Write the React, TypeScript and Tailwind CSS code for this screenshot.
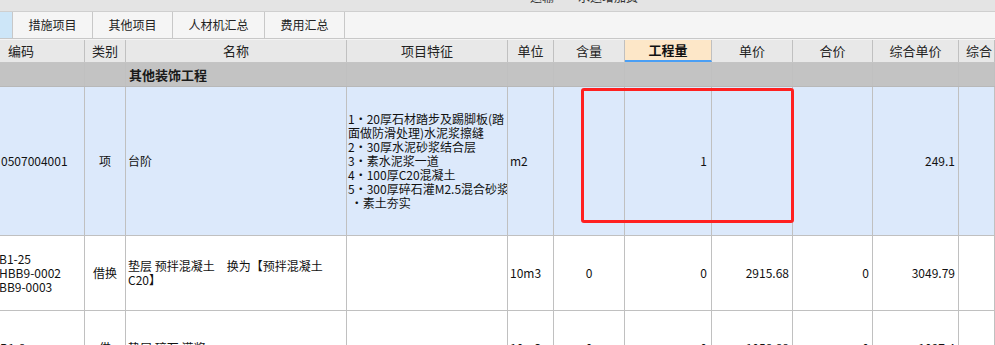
import React from "react";

const cols =
  "grid grid-cols-[85px_41px_221px_161px_46px_71px_87px_81px_80px_86px_1fr]";
const font = {
  fontFamily: '"Noto Sans CJK SC", "Noto Sans", sans-serif',
};

function Cell({
  children,
  className = "",
}: {
  children?: React.ReactNode;
  className?: string;
}) {
  return (
    <div
      className={`border-r border-[#c0c0c0] flex items-center overflow-hidden ${className}`}
    >
      {children}
    </div>
  );
}

export default function App() {
  const headers = [
    ["编码", "justify-start pl-[8px]"],
    ["类别", "justify-center"],
    ["名称", "justify-center"],
    ["项目特征", "justify-center"],
    ["单位", "justify-center"],
    ["含量", "justify-center"],
    ["工程量", "justify-center"],
    ["单价", "justify-center"],
    ["合价", "justify-center"],
    ["综合单价", "justify-center"],
    ["综合", "justify-start pl-[7px]"],
  ];

  return (
    <div
      className="w-[995px] h-[345px] overflow-hidden bg-white text-[12px] text-[#111] relative"
      style={font}
    >
      {/* top strip */}
      <div className="h-[12px] bg-[#e4e4e4] border-b border-[#cfcfcf] overflow-hidden">
        <div className="flex -mt-[10px] leading-[14px] text-[#333]">
          <span className="ml-[530px]">运输</span>
          <span className="ml-[24px]">水运增加费</span>
        </div>
      </div>

      {/* tabs */}
      <div className="h-[27px] bg-[#f5f5f5] border-b border-[#c8c8c8] flex">
        <div className="w-[13px] bg-[#cde6f8] border-r border-[#c8c8c8]" />
        {[
          ["措施项目", "w-[80px]"],
          ["其他项目", "w-[80px]"],
          ["人材机汇总", "w-[92px]"],
          ["费用汇总", "w-[80px]"],
        ].map(([t, w]) => (
          <div
            key={t}
            className={`${w} border-r border-[#c8c8c8] flex items-center justify-center text-[12px] text-[#222]`}
          >
            {t}
          </div>
        ))}
      </div>

      {/* header */}
      <div
        className={`${cols} h-[24px] bg-[#e8e8e8] border-b border-[#c4c4c4] border-t border-t-[#f4f4f4]`}
      >
        {headers.map(([t, c], i) =>
          i === 6 ? (
            <div
              key={t}
              className="border-r border-[#c0c0c0] flex items-center justify-center bg-[#fde7c8] border-b-2 border-b-[#4a9ff5] font-bold text-[13px]"
            >
              {t}
            </div>
          ) : (
            <Cell key={t} className={`${c} text-[13px] text-[#222]`}>
              {t}
            </Cell>
          )
        )}
      </div>

      {/* group row */}
      <div className={`${cols} h-[24px] bg-[#c3c3c3] border-b border-[#b8b8b8]`}>
        <Cell className="border-[#b8b8b8]" />
        <Cell className="border-[#b8b8b8]" />
        <Cell className="border-[#b8b8b8] pl-[3px] font-bold text-[13px] text-[#1a1a1a]">
          其他装饰工程
        </Cell>
        <Cell className="border-[#b8b8b8]" />
        <Cell className="border-[#b8b8b8]" />
        <Cell className="border-[#b8b8b8]" />
        <Cell className="border-[#b8b8b8]" />
        <Cell className="border-[#b8b8b8]" />
        <Cell className="border-[#b8b8b8]" />
        <Cell className="border-[#b8b8b8]" />
        <Cell className="border-[#b8b8b8]" />
      </div>

      {/* row 1 */}
      <div className={`${cols} h-[149px] bg-[#dce9fb] border-b border-[#c0c0c0]`}>
        <Cell className="pl-[1px]">0507004001</Cell>
        <Cell className="justify-center">项</Cell>
        <Cell className="pl-[2px]">台阶</Cell>
        <Cell className="pl-[1px]">
          <div className="leading-[14px] whitespace-pre">
            <div>1・20厚石材踏步及踢脚板(踏</div>
            <div>面做防滑处理)水泥浆擦缝</div>
            <div>2・30厚水泥砂浆结合层</div>
            <div>3・素水泥浆一道</div>
            <div>4・100厚C20混凝土</div>
            <div>5・300厚碎石灌M2.5混合砂浆</div>
            <div> ・素土夯实</div>
          </div>
        </Cell>
        <Cell className="pl-[2px]">m2</Cell>
        <Cell />
        <Cell className="justify-end pr-[4px]">1</Cell>
        <Cell />
        <Cell />
        <Cell className="justify-end pr-[3px]">249.1</Cell>
        <Cell />
      </div>

      {/* row 2 */}
      <div className={`${cols} h-[75px] bg-white border-b border-[#c0c0c0]`}>
        <Cell className="pl-0">
          <div className="leading-[14px] -ml-[1px]">
            <div>B1-25</div>
            <div>HBB9-0002</div>
            <div>BB9-0003</div>
          </div>
        </Cell>
        <Cell className="justify-center">借换</Cell>
        <Cell className="pl-[2px]">
          <div className="leading-[14px] whitespace-pre">
            <div>垫层 预拌混凝土　换为【预拌混凝土</div>
            <div>C20】</div>
          </div>
        </Cell>
        <Cell />
        <Cell className="pl-[2px]">10m3</Cell>
        <Cell className="justify-center">0</Cell>
        <Cell className="justify-end pr-[4px]">0</Cell>
        <Cell className="justify-end pr-[3px]">2915.68</Cell>
        <Cell className="justify-end pr-[3px]">0</Cell>
        <Cell className="justify-end pr-[3px]">3049.79</Cell>
        <Cell />
      </div>

      {/* row 3 */}
      <div className={`${cols} h-[75px] bg-white border-b border-[#c0c0c0]`}>
        <Cell className="pl-0">B1-8</Cell>
        <Cell className="justify-center">借</Cell>
        <Cell className="pl-[2px] whitespace-pre">垫层 碎石 灌浆</Cell>
        <Cell />
        <Cell className="pl-[2px]">10m3</Cell>
        <Cell className="justify-center">0</Cell>
        <Cell className="justify-end pr-[4px]">0</Cell>
        <Cell className="justify-end pr-[3px]">1058.88</Cell>
        <Cell className="justify-end pr-[3px]">0</Cell>
        <Cell className="justify-end pr-[3px]">1097.4</Cell>
        <Cell />
      </div>

      {/* red annotation box */}
      <div className="absolute left-[581px] top-[88px] w-[213px] h-[135px] border-[3px] border-[#ff2020] rounded-[3px] pointer-events-none" />
    </div>
  );
}
